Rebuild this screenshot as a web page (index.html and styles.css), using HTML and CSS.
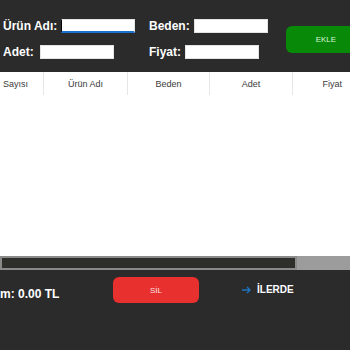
FILE: index.html
```html
<!DOCTYPE html>
<html lang="tr">
<head>
  <meta charset="UTF-8" />
  <title>Ürün Kayıt</title>
  <link rel="stylesheet" href="styles.css">
</head>
<body>

<div class="top">
  <form class="fields">
    <label class="field">Ürün Adı: <input type="text" class="focused"></label>
    <label class="field">Beden: <input type="text"></label>
    <label class="field">Adet: <input type="text" class="wide-gap"></label>
    <label class="field">Fiyat: <input type="text"></label>
  </form>
  <button class="ekle" type="button">EKLE</button>
</div>

<div class="table">
  <div class="head">
    <div class="col first">Sayısı</div>
    <div class="col">Ürün Adı</div>
    <div class="col">Beden</div>
    <div class="col">Adet</div>
    <div class="col">Fiyat</div>
  </div>
</div>

<div class="scrollbar">
  <div class="track"></div>
  <div class="rest"></div>
</div>

<div class="bottom">
  <div class="total">m: 0.00 TL</div>
  <button class="sil" type="button">SİL</button>
  <div class="ilerde">
    <svg width="9" height="8" viewBox="0 0 9 8"><path d="M0 4h8M5 1l3 3-3 3" fill="none" stroke="#1e74c4" stroke-width="1.4"/></svg>
    <span>İLERDE</span>
  </div>
</div>

</body>
</html>
```

FILE: styles.css
```css
html, body {
  overflow: hidden;
}
body {
  margin: 0;
  width: 350px;
  height: 350px;
  background: #2b2b2b;
  font-family: "Liberation Sans", Arial, sans-serif;
  color: #fff;
}
.top {
  display: flex;
  height: 72px;
}
.fields {
  display: grid;
  grid-template-columns: 146px auto;
  row-gap: 12px;
  padding: 19px 0 0 3px;
  margin: 0;
  align-content: start;
}
.field {
  display: flex;
  align-items: center;
  gap: 4px;
  height: 14px;
  font-size: 12px;
  font-weight: 700;
  white-space: nowrap;
}
.field input {
  width: 74px;
  height: 14px;
  box-sizing: border-box;
  margin: 0;
  padding: 0;
  border: 1px solid #e4e4e4;
  background: #fff;
}
.field input.focused {
  border-left: 1px solid #000;
  border-bottom: 2px solid #1a72d2;
}
.field input.wide-gap {
  margin-left: 2px;
}
.ekle {
  flex-shrink: 0;
  width: 65px;
  height: 27px;
  margin: 26px 0 0 18px;
  border: none;
  border-radius: 6px 0 0 6px;
  background: #088908;
  color: #d8f5d8;
  font-family: "Liberation Sans", Arial, sans-serif;
  font-size: 8px;
  padding: 0;
  text-align: left;
  text-indent: 30px;
}
.table {
  height: 184px;
  background: #fff;
}
.head {
  display: grid;
  grid-template-columns: 43px 84px 82px 83px 58px;
  height: 23px;
}
.col {
  display: flex;
  align-items: center;
  justify-content: center;
  font-size: 9px;
  color: #3a3a3a;
  border-left: 1px solid #e6e6e6;
  white-space: nowrap;
  overflow: hidden;
}
.col.first {
  justify-content: flex-start;
  padding-left: 3px;
  border-left: none;
}
.col:last-child {
  justify-content: flex-end;
  padding-right: 8px;
}
.scrollbar {
  display: flex;
  height: 14px;
}
.track {
  width: 297px;
  box-sizing: border-box;
  border: 2px solid #8a8a8a;
  background: #2e2f2a;
}
.rest {
  flex: 1;
  background: #9c9c9c;
}
.bottom {
  display: flex;
  align-items: flex-start;
  padding-top: 7px;
}
.total {
  width: 113px;
  margin-top: 10px;
  line-height: 14px;
  font-size: 12px;
  font-weight: 700;
  white-space: nowrap;
}
.sil {
  width: 86px;
  height: 26px;
  border: none;
  border-radius: 6px;
  background: #e8302f;
  color: #fbe3e3;
  font-family: "Liberation Sans", Arial, sans-serif;
  font-size: 8px;
  padding: 0;
}
.ilerde {
  display: flex;
  align-items: center;
  gap: 6px;
  margin: 6px 0 0 43px;
  line-height: 14px;
  font-size: 10px;
  font-weight: 700;
}
```
